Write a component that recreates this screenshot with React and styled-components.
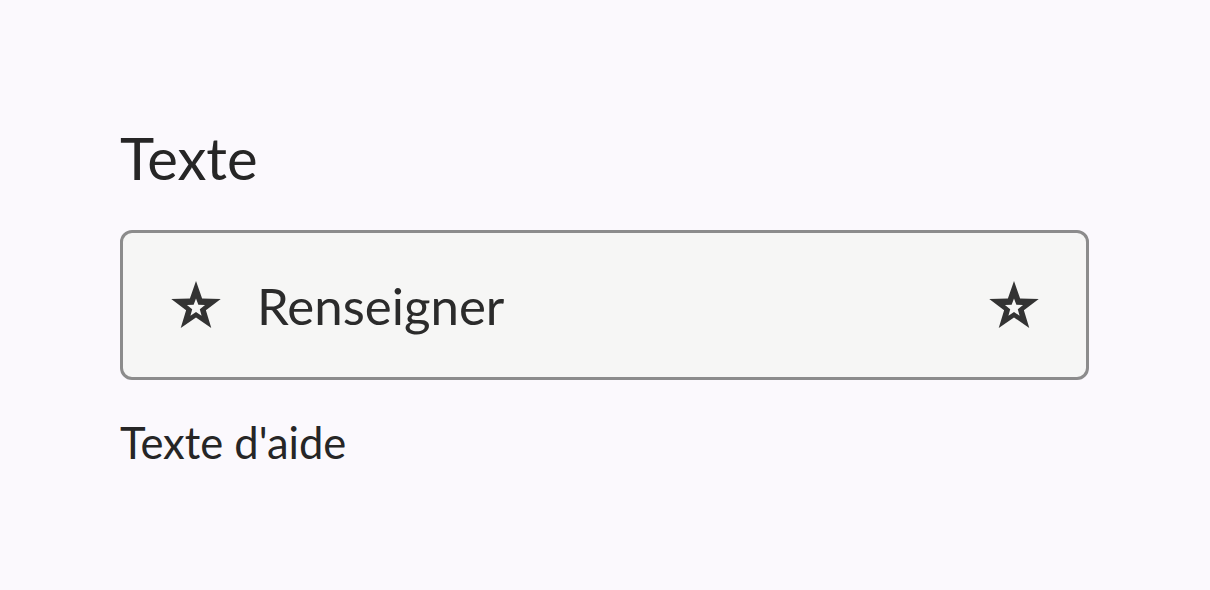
import React from 'react'
import styled, { createGlobalStyle } from 'styled-components'

const GlobalStyle = createGlobalStyle`
  html, body {
    margin: 0;
    padding: 0;
    background: #fbf9fd;
  }
  body {
    font-family: Lato, "Open Sans", sans-serif;
    color: #262626;
  }
`

const starPoints = (cx, cy, outer, inner) => {
  const pts = []
  for (let i = 0; i < 10; i++) {
    const r = i % 2 === 0 ? outer : inner
    const a = (Math.PI / 180) * (-90 + i * 36)
    pts.push(`${(cx + r * Math.cos(a)).toFixed(2)},${(cy + r * Math.sin(a)).toFixed(2)}`)
  }
  return 'M' + pts.join('L') + 'Z'
}

const StarIcon = () => (
  <svg width="50" height="50" viewBox="0 0 50 50" aria-hidden="true">
    <path
      fillRule="evenodd"
      fill="#333333"
      d={starPoints(25, 27, 26, 10.4) + starPoints(25, 28, 9.5, 4)}
    />
  </svg>
)

const Page = styled.main`
  padding: 120px 120px 0 120px;
`

const Field = styled.div`
  width: 969px;
  display: flex;
  flex-direction: column;
`

const Label = styled.label`
  font-size: 58px;
  line-height: 76px;
  margin-bottom: 34px;
`

const InputBox = styled.div`
  box-sizing: border-box;
  height: 150px;
  border: 3px solid #8c8c8c;
  border-radius: 12px;
  background: #f6f6f5;
  display: flex;
  align-items: center;
  padding: 0 47px 0 48px;
  gap: 36px;
`

const Value = styled.span`
  flex: 1;
  font-size: 51px;
  color: #2b2b2b;
`

const Help = styled.p`
  margin: 34px 0 0;
  font-size: 43.5px;
  line-height: 56px;
`

export default function App() {
  return (
    <>
      <GlobalStyle />
      <Page>
        <Field>
          <Label>Texte</Label>
          <InputBox>
            <StarIcon />
            <Value>Renseigner</Value>
            <StarIcon />
          </InputBox>
          <Help>Texte d'aide</Help>
        </Field>
      </Page>
    </>
  )
}
